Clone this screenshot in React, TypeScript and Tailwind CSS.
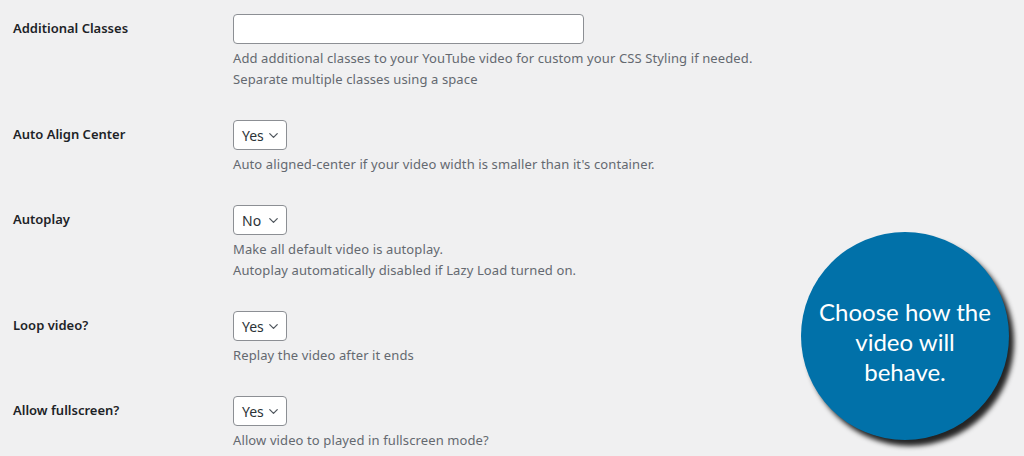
import { ChevronDown } from 'lucide-react'

type Row = {
  label: string
  control: 'text' | 'Yes' | 'No'
  notes: string[]
}

const rows: Row[] = [
  {
    label: 'Additional Classes',
    control: 'text',
    notes: [
      'Add additional classes to your YouTube video for custom your CSS Styling if needed.',
      'Separate multiple classes using a space',
    ],
  },
  {
    label: 'Auto Align Center',
    control: 'Yes',
    notes: ["Auto aligned-center if your video width is smaller than it's container."],
  },
  {
    label: 'Autoplay',
    control: 'No',
    notes: ['Make all default video is autoplay.', 'Autoplay automatically disabled if Lazy Load turned on.'],
  },
  { label: 'Loop video?', control: 'Yes', notes: ['Replay the video after it ends'] },
  { label: 'Allow fullscreen?', control: 'Yes', notes: ['Allow video to played in fullscreen mode?'] },
]

function Select({ value }: { value: string }) {
  return (
    <div className="flex h-[30px] w-[54px] items-center justify-between rounded-[4px] border border-[#8c8f94] bg-white pl-[8px] pr-[5px] text-[14px] text-[#2c3338]">
      <span>{value}</span>
      <ChevronDown size={15} strokeWidth={2} className="text-[#50575e]" />
    </div>
  )
}

export default function App() {
  return (
    <div
      className="relative h-[456px] w-[1024px] overflow-hidden bg-[#f0f0f1] pl-[13px]"
      style={{ fontFamily: '"Noto Sans", "Open Sans", sans-serif' }}
    >
      <div className="-mt-px">
        {rows.map((row) => (
          <div key={row.label} className="flex">
            <div className="w-[210px] shrink-0 pt-[19px] text-[13px] font-semibold leading-[21px] text-[#1d2327]">
              {row.label}
            </div>
            <div className="px-[10px] py-[15px]">
              {row.control === 'text' ? (
                <div className="h-[30px] w-[351px] rounded-[4px] border border-[#8c8f94] bg-white" />
              ) : (
                <Select value={row.control} />
              )}
              <div className="mt-[4px] text-[13px] leading-[21px] tracking-[0.11px] text-[#646970]">
                {row.notes.map((n) => (
                  <p key={n}>{n}</p>
                ))}
              </div>
            </div>
          </div>
        ))}
      </div>

      <div className="absolute left-[801px] top-[232px] flex h-[208px] w-[208px] items-center justify-center rounded-full bg-[#0171a9] shadow-[5px_6px_5px_rgba(0,0,0,0.85)]">
        <p
          className="mt-[12px] text-center text-[24px] leading-[30px] text-white"
          style={{ fontFamily: 'Lato, "Open Sans", sans-serif' }}
        >
          Choose how the
          <br />
          video will
          <br />
          behave.
        </p>
      </div>
    </div>
  )
}
